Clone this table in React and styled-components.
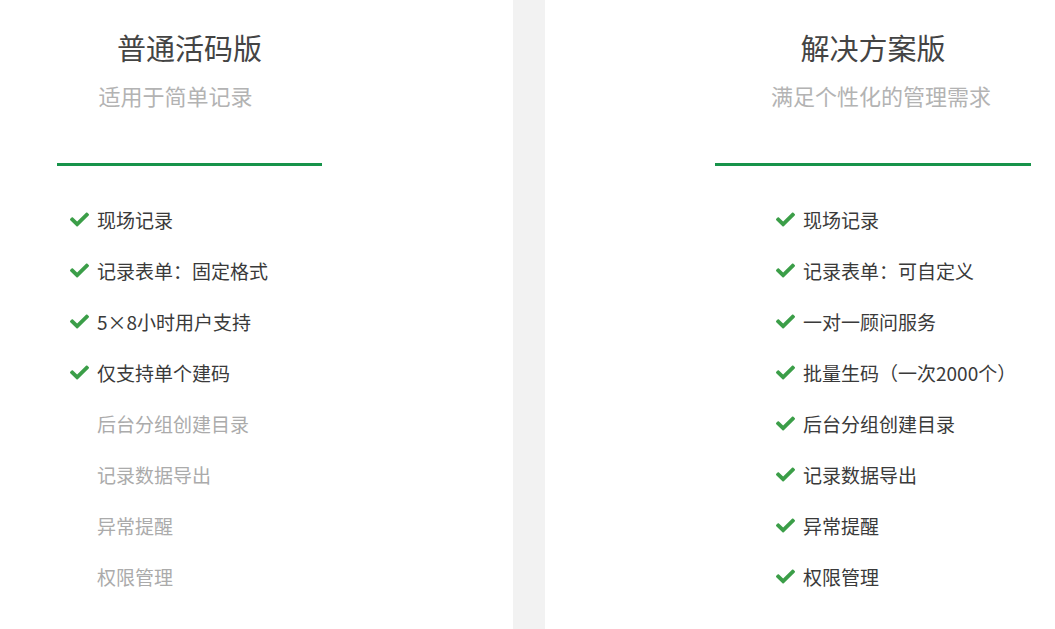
import styled, { createGlobalStyle } from "styled-components";

const GlobalStyle = createGlobalStyle`
    body {
        margin: 0;
        background: #fff;
        font-family: "Noto Sans CJK SC", "Noto Sans", sans-serif;
    }
`;

const Page = styled.div`
    display: flex;
    width: 1055px;
    height: 629px;
    overflow: hidden;
`;

const Panel = styled.div`
    width: ${(p) => p.$width}px;
    flex-shrink: 0;
    background: #fff;
    display: flex;
    flex-direction: column;
`;

const Divider = styled.div`
    width: 32px;
    flex-shrink: 0;
    background: #f2f2f2;
`;

const Header = styled.div`
    margin-left: ${(p) => p.$left}px;
    width: ${(p) => p.$width}px;
    padding-top: 33px;
    display: flex;
    flex-direction: column;
    align-items: center;
`;

const Title = styled.div`
    font-size: 29px;
    line-height: 29px;
    color: #444;
`;

const Subtitle = styled.div`
    margin-top: 22px;
    font-size: 22px;
    line-height: 22px;
    color: #b3b3b3;
    transform: translateX(${(p) => p.$shift}px);
`;

const Line = styled.div`
    margin-top: 57px;
    align-self: stretch;
    height: 3px;
    background: #17934a;
`;

const List = styled.ul`
    list-style: none;
    margin: 28px 0 0 ${(p) => p.$left}px;
    padding: 0;
`;

const Item = styled.li`
    display: flex;
    align-items: center;
    height: 51px;
    font-size: 19px;
    color: ${(p) => (p.$off ? "#ababab" : "#3a3a3a")};
`;

const CheckBox = styled.span`
    width: 19px;
    margin-right: 8px;
    display: flex;
    align-items: center;
`;

function Check() {
    return (
        <svg width="19" height="19" viewBox="0 0 512 512">
            <path
                fill="#3b9e48"
                d="M173.898 439.404l-166.4-166.4c-9.997-9.997-9.997-26.206 0-36.204l36.203-36.204c9.997-9.998 26.207-9.998 36.204 0L192 312.69 432.095 72.596c9.997-9.997 26.207-9.997 36.204 0l36.203 36.204c9.997 9.997 9.997 26.206 0 36.204l-294.4 294.401c-9.998 9.997-26.207 9.997-36.204-.001z"
            />
        </svg>
    );
}

const basic = [
    ["现场记录", true],
    ["记录表单：固定格式", true],
    ["5×8小时用户支持", true],
    ["仅支持单个建码", true],
    ["后台分组创建目录", false],
    ["记录数据导出", false],
    ["异常提醒", false],
    ["权限管理", false],
];

const pro = [
    "现场记录",
    "记录表单：可自定义",
    "一对一顾问服务",
    "批量生码（一次2000个）",
    "后台分组创建目录",
    "记录数据导出",
    "异常提醒",
    "权限管理",
];

export default function App() {
    return (
        <Page>
            <GlobalStyle />
            <Panel $width={513}>
                <Header $left={57} $width={265}>
                    <Title>普通活码版</Title>
                    <Subtitle $shift={-14}>适用于简单记录</Subtitle>
                    <Line />
                </Header>
                <List $left={70}>
                    {basic.map(([text, on]) => (
                        <Item key={text} $off={!on}>
                            <CheckBox>{on && <Check />}</CheckBox>
                            {text}
                        </Item>
                    ))}
                </List>
            </Panel>
            <Divider />
            <Panel $width={510}>
                <Header $left={170} $width={316}>
                    <Title>解决方案版</Title>
                    <Subtitle $shift={8}>满足个性化的管理需求</Subtitle>
                    <Line />
                </Header>
                <List $left={231}>
                    {pro.map((text) => (
                        <Item key={text}>
                            <CheckBox>
                                <Check />
                            </CheckBox>
                            {text}
                        </Item>
                    ))}
                </List>
            </Panel>
        </Page>
    );
}
